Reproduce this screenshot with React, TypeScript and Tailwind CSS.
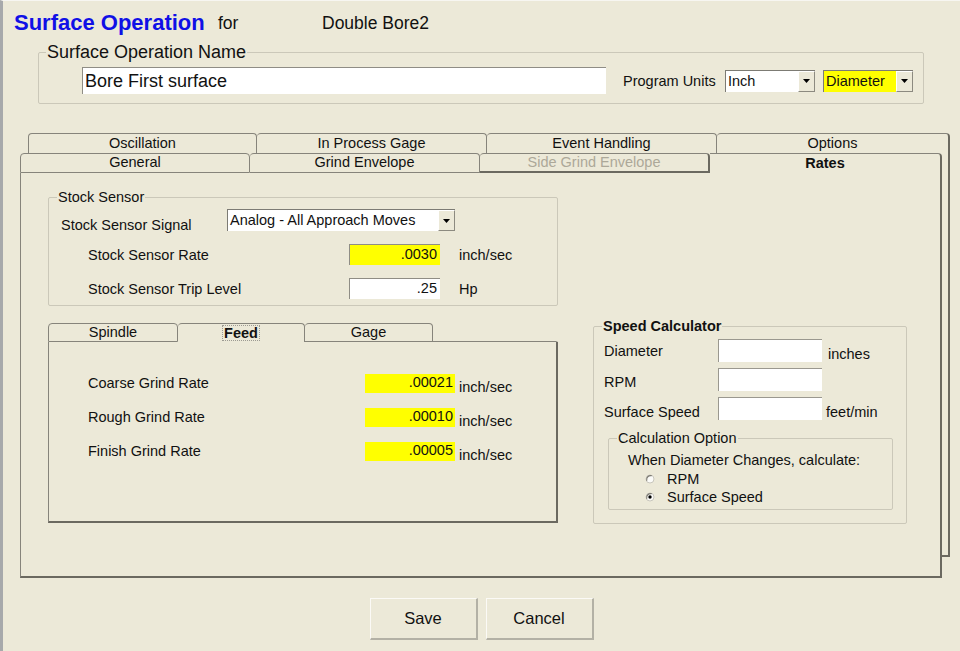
import React from "react";

const TABLINE = "border-[#86847b]";

function Arrow() {
  return (
    <div className="flex h-full w-[17px] items-center justify-center border-t border-l border-t-white border-l-white border-b border-r border-b-[#8c8a80] border-r-[#8c8a80] bg-[#ECE9D8]">
      <svg width="7" height="4" viewBox="0 0 7 4">
        <path d="M0 0H7L3.5 4Z" fill="#000" />
      </svg>
    </div>
  );
}

function Dropdown({ text, box, field }: { text: string; box: string; field: string }) {
  return (
    <div className={`flex border-t border-l border-t-[#7c7b74] border-l-[#7c7b74] bg-white ${box}`}>
      <div className={`flex-1 pl-[2px] text-[14.5px] leading-[20px] ${field}`}>{text}</div>
      <Arrow />
    </div>
  );
}

function Radio({ checked }: { checked: boolean }) {
  return (
    <svg width="10" height="10" viewBox="0 0 10 10" className="shrink-0">
      <circle cx="5" cy="5" r="4" fill="#fbfbf8" stroke="#c9c7bd" strokeWidth="1" />
      <path d="M1.8 6.8A4 4 0 0 1 6.8 1.8" fill="none" stroke="#7d7b72" strokeWidth="1.2" />
      {checked && <circle cx="5" cy="5" r="1.7" fill="#000" />}
    </svg>
  );
}

function RateRow({ label, value }: { label: string; value: string }) {
  return (
    <div className="flex h-[19px] items-start">
      <div className="w-[277px] text-[14.5px] leading-[19px]">{label}</div>
      <div className="h-[19px] w-[90px] bg-[#FFFF00] pr-[2px] text-right text-[14.5px] leading-[17px]">{value}</div>
      <div className="ml-[4px] mt-[4px] text-[14.5px] leading-[19px]">inch/sec</div>
    </div>
  );
}

function CalcRow({ label, unit, unitMl, labelMt }: { label: string; unit?: string; unitMl: string; labelMt: string }) {
  return (
    <div className="flex h-[23px] items-start">
      <div className={`w-[114px] text-[14.5px] leading-[16px] ${labelMt}`}>{label}</div>
      <div className="h-[23px] w-[104px] border-t border-l border-t-[#9a988f] border-l-[#9a988f] bg-white" />
      {unit && <div className={`mt-[7px] text-[14.5px] leading-[16px] ${unitMl}`}>{unit}</div>}
    </div>
  );
}

export default function App() {
  return (
    <div className="flex h-[651px] w-[960px] flex-col overflow-hidden border-l-[3px] border-l-[#a7a9ab] border-t border-t-[#f7f6f1] bg-[#ECE9D8] font-['Liberation_Sans',Arial,sans-serif] text-[#111]">
      {/* Title */}
      <div className="flex items-end pl-[11px] pt-[11px]">
        <span className="inline-block w-[204px] text-[22px] font-bold leading-[22px] text-[#1010e6]">Surface Operation</span>
        <span className="inline-block w-[104px] text-[17.5px] leading-[22px]">for</span>
        <span className="text-[17.5px] leading-[22px]">Double Bore2</span>
      </div>

      {/* Surface Operation Name group */}
      <div className="ml-[35px] mt-[18px] h-[52px] w-[886px] rounded-[2px] border border-[#cbc8b9]">
        <div className="-mt-[10px] ml-[7px] w-fit bg-[#ECE9D8] px-[1px] text-[18px] leading-[18px]">Surface Operation Name</div>
        <div className="mt-[6px] flex items-center">
          <div className="ml-[43px] h-[27px] w-[524px] border-t border-l border-t-[#8f8d85] border-l-[#8f8d85] bg-white pl-[2px] text-[18px] leading-[26px]">
            Bore First surface
          </div>
          <div className="ml-[17px] w-[102px] text-[14.5px] leading-[18px]">Program Units</div>
          <Dropdown text="Inch" box="h-[22px] w-[90px]" field="bg-white" />
          <Dropdown text="Diameter" box="ml-[8px] h-[22px] w-[90px]" field="bg-[#FFFF00]" />
        </div>
      </div>

      {/* Tabs */}
      <div className="ml-[17px] mt-[29px] w-[930px]">
        <div className="flex h-[20px] pl-[8px] text-[14.5px]">
          <div className={`flex w-[229px] items-center justify-center rounded-t-[4px] border-t border-l border-r ${TABLINE}`}>Oscillation</div>
          <div className={`flex w-[230px] items-center justify-center rounded-t-[4px] border-t border-r ${TABLINE}`}>In Process Gage</div>
          <div className={`flex w-[230px] items-center justify-center rounded-t-[4px] border-t border-r ${TABLINE}`}>Event Handling</div>
          <div className="flex w-[233px] items-center justify-center rounded-t-[4px] border-t border-t-[#86847b] border-r-2 border-r-[#6b6960]">Options</div>
        </div>
        <div className="flex items-start">
          <div className="flex w-[922px] flex-col">
            <div className="flex h-[20px] text-[14.5px]">
              <div className={`flex w-[230px] items-center justify-center rounded-t-[4px] border ${TABLINE}`}>General</div>
              <div className={`flex w-[230px] items-center justify-center rounded-t-[4px] border-t border-r border-b ${TABLINE}`}>Grind Envelope</div>
              <div className="flex w-[230px] items-center justify-center rounded-t-[4px] border-t border-t-[#86847b] border-b-2 border-b-[#6b6960] border-r-2 border-r-[#6b6960] text-[#aca899]">Side Grind Envelope</div>
              <div className="flex w-[232px] items-center justify-center rounded-tr-[4px] border-t border-t-[#86847b] border-r-2 border-r-[#6b6960] font-bold">Rates</div>
            </div>
            <div className="flex h-[405px] flex-col border-l border-l-[#86847b] border-r-2 border-r-[#6b6960] border-b-2 border-b-[#6b6960]">
              {/* Stock Sensor */}
              <div className="ml-[27px] mt-[24px] h-[109px] w-[510px] rounded-[2px] border border-[#cbc8b9]">
                <div className="-mt-[9px] ml-[8px] w-fit bg-[#ECE9D8] px-[1px] text-[14.5px] leading-[16px]">Stock Sensor</div>
                <div className="mt-[4px] flex h-[22px] items-start">
                  <div className="ml-[12px] mt-[8px] w-[166px] text-[14.5px] leading-[16px]">Stock Sensor Signal</div>
                  <Dropdown text="Analog - All Approach Moves" box="h-[22px] w-[228px]" field="bg-white" />
                </div>
                <div className="mt-[13px] flex h-[21px] items-center">
                  <div className="ml-[39px] w-[261px] text-[14.5px] leading-[16px]">Stock Sensor Rate</div>
                  <div className="h-[21px] w-[91px] border-t border-l border-t-[#8f8d85] border-l-[#8f8d85] bg-[#FFFF00] pr-[3px] text-right text-[14.5px] leading-[19px]">.0030</div>
                  <div className="ml-[19px] text-[14.5px] leading-[16px]">inch/sec</div>
                </div>
                <div className="mt-[13px] flex h-[21px] items-center">
                  <div className="ml-[39px] w-[261px] text-[14.5px] leading-[16px]">Stock Sensor Trip Level</div>
                  <div className="h-[21px] w-[91px] border-t border-l border-t-[#8f8d85] border-l-[#8f8d85] bg-white pr-[3px] text-right text-[14.5px] leading-[19px]">.25</div>
                  <div className="ml-[19px] text-[14.5px] leading-[16px]">Hp</div>
                </div>
              </div>

              <div className="ml-[27px] mt-[17px] flex items-start">
                {/* Inner tab widget */}
                <div className="flex w-[510px] flex-col">
                  <div className="flex h-[19px] text-[14.5px]">
                    <div className={`flex w-[130px] items-center justify-center rounded-t-[4px] border ${TABLINE}`}>Spindle</div>
                    <div className={`flex w-[127px] items-center justify-center rounded-t-[4px] border-t border-r ${TABLINE} font-bold`}>
                      <span className="border border-dotted border-[#9c9a92] px-[1px] leading-[14px]">Feed</span>
                    </div>
                    <div className={`flex w-[128px] items-center justify-center rounded-t-[4px] border-t border-r border-b ${TABLINE}`}>Gage</div>
                    <div className="flex-1 border-b border-r-2 border-b-[#86847b] border-r-transparent" />
                  </div>
                  <div className="flex h-[181px] flex-col gap-[15px] border-l border-l-[#86847b] border-r-2 border-r-[#6b6960] border-b-2 border-b-[#6b6960] pl-[39px] pt-[32px]">
                    <RateRow label="Coarse Grind Rate" value=".00021" />
                    <RateRow label="Rough Grind Rate" value=".00010" />
                    <RateRow label="Finish Grind Rate" value=".00005" />
                  </div>
                </div>

                {/* Speed Calculator */}
                <div className="ml-[35px] mt-[3px] h-[198px] w-[314px] rounded-[2px] border border-[#cbc8b9]">
                  <div className="-mt-[9px] ml-[8px] w-fit bg-[#ECE9D8] px-[1px] text-[14.5px] font-bold leading-[16px]">Speed Calculator</div>
                  <div className="ml-[10px] mt-[5px] flex flex-col gap-[6px]">
                    <CalcRow label="Diameter" unit="inches" unitMl="ml-[6px]" labelMt="mt-[4px]" />
                    <CalcRow label="RPM" unitMl="ml-[6px]" labelMt="mt-[6px]" />
                    <CalcRow label="Surface Speed" unit="feet/min" unitMl="ml-[4px]" labelMt="mt-[7px]" />
                  </div>
                  <div className="ml-[14px] mt-[18px] h-[72px] w-[285px] rounded-[2px] border border-[#cbc8b9]">
                    <div className="-mt-[9px] ml-[8px] w-fit bg-[#ECE9D8] px-[1px] text-[14.5px] leading-[16px]">Calculation Option</div>
                    <div className="ml-[19px] mt-[6px] text-[14.5px] leading-[16px]">When Diameter Changes, calculate:</div>
                    <div className="ml-[36px] mt-[2px] flex h-[18px] items-center text-[14.5px]">
                      <Radio checked={false} />
                      <span className="ml-[12px] leading-[18px]">RPM</span>
                    </div>
                    <div className="ml-[36px] flex h-[18px] items-center text-[14.5px]">
                      <Radio checked={true} />
                      <span className="ml-[12px] leading-[18px]">Surface Speed</span>
                    </div>
                  </div>
                </div>
              </div>
            </div>
          </div>
          <div className="h-[404px] w-[8px] border-r-2 border-b-2 border-[#6b6960]" />
        </div>
      </div>

      {/* Buttons */}
      <div className="mt-[20px] flex justify-center gap-[8px]">
        <button className="h-[42px] w-[108px] border-t border-l border-t-[#fbfaf6] border-l-[#fbfaf6] border-b-2 border-r-2 border-b-[#b3b1a5] border-r-[#b3b1a5] bg-[#ECE9D8] text-[16.5px] text-[#111]">Save</button>
        <button className="h-[42px] w-[108px] border-t border-l border-t-[#fbfaf6] border-l-[#fbfaf6] border-b-2 border-r-2 border-b-[#b3b1a5] border-r-[#b3b1a5] bg-[#ECE9D8] text-[16.5px] text-[#111]">Cancel</button>
      </div>
    </div>
  );
}
